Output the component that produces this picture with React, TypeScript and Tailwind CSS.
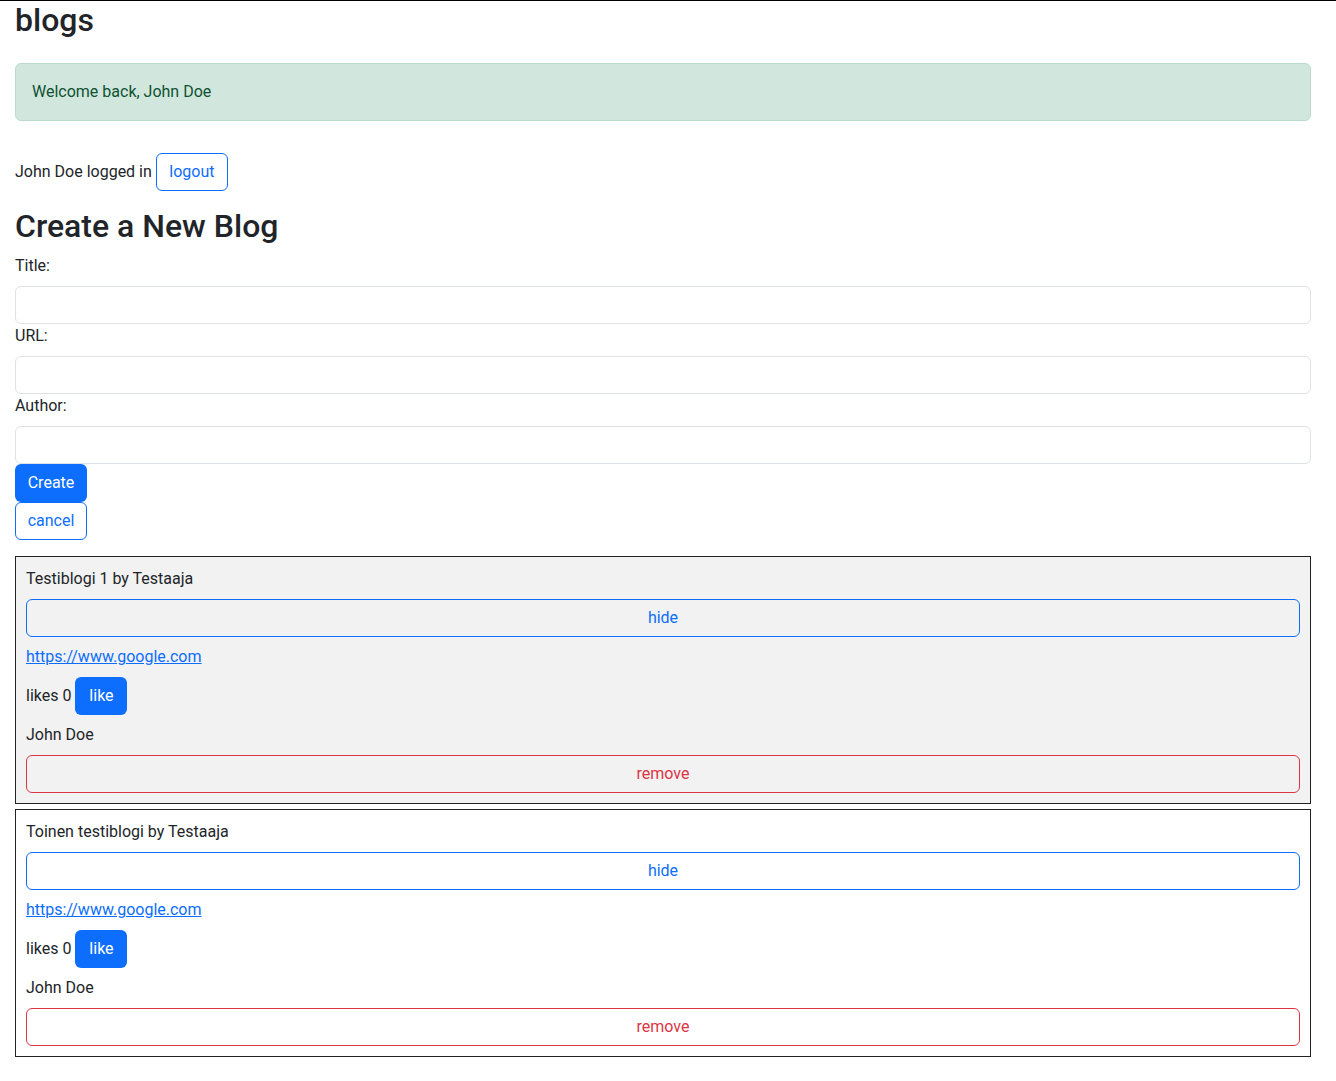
const blogs = [
  { id: 1, title: "Testiblogi 1", author: "Testaaja", url: "https://www.google.com", likes: 0, user: "John Doe", highlighted: true },
  { id: 2, title: "Toinen testiblogi", author: "Testaaja", url: "https://www.google.com", likes: 0, user: "John Doe", highlighted: false },
];

const Blog = ({ blog }: { blog: (typeof blogs)[number] }) => (
  <div
    className={`flex flex-col gap-2 border border-[#222] p-[10px] ${
      blog.highlighted ? "bg-[#f2f2f2]" : "bg-white"
    }`}
  >
    <div className="leading-6">
      {blog.title} by {blog.author}
    </div>
    <button className="h-[38px] w-full rounded-md border border-[#0d6efd] text-[#0d6efd] leading-6">
      hide
    </button>
    <div className="leading-6">
      <a href={blog.url} className="text-[#0d6efd] underline">
        {blog.url}
      </a>
    </div>
    <div className="flex items-center gap-1 leading-6">
      <span>likes {blog.likes}</span>
      <button className="h-[38px] w-[52px] rounded-md bg-[#0d6efd] text-white">like</button>
    </div>
    <div className="leading-6">{blog.user}</div>
    <button className="h-[38px] w-full rounded-md border border-[#dc3545] text-[#dc3545] leading-6">
      remove
    </button>
  </div>
);

const Field = ({ label }: { label: string }) => (
  <div>
    <label className="mb-2 block leading-6">{label}</label>
    <input
      type="text"
      className="block h-[38px] w-full rounded-md border border-[#dee2e6] bg-white px-3 outline-none"
    />
  </div>
);

const App = () => {
  return (
    <div
      className="min-h-screen border-t border-black bg-white text-base text-[#212529]"
      style={{ fontFamily: "Roboto, 'Noto Sans', sans-serif" }}
    >
      <div className="ml-[15px] w-[1296px] pb-6">
        <h2 className="text-[32px] font-medium leading-[38px]">blogs</h2>

        <div className="mt-[24px] rounded-md border border-[#badbcc] bg-[#d1e7dd] px-4 py-4 leading-6 text-[#0f5132]">
          Welcome back, John Doe
        </div>

        <div className="mt-8 flex items-center gap-[4px] leading-6">
          <span>John Doe logged in</span>
          <button className="h-[38px] w-[72px] rounded-md border border-[#0d6efd] text-[#0d6efd]">logout</button>
        </div>

        <h2 className="mt-4 text-[32px] font-medium leading-[38px]">Create a New Blog</h2>

        <form className="mt-[9px]" onSubmit={(e) => e.preventDefault()}>
          <Field label="Title:" />
          <Field label="URL:" />
          <Field label="Author:" />
          <div className="flex flex-col items-start">
            <button type="submit" className="h-[38px] w-[72px] rounded-md bg-[#0d6efd] text-white">
              Create
            </button>
            <button type="button" className="h-[38px] w-[72px] rounded-md border border-[#0d6efd] text-[#0d6efd]">
              cancel
            </button>
          </div>
        </form>

        <div className="mt-4 flex flex-col gap-[5px]">
          {blogs.map((b) => (
            <Blog key={b.id} blog={b} />
          ))}
        </div>
      </div>
    </div>
  );
};

export default App;
